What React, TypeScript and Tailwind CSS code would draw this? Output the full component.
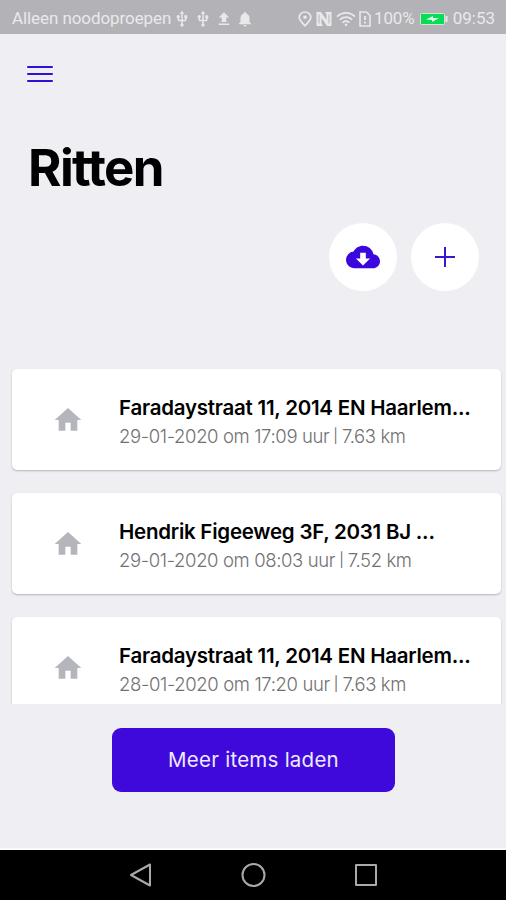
import { MdCloudDownload, MdFileUpload, MdHome, MdNotifications, MdUsb } from "react-icons/md";

type Ride = { title: string; time: string; distance: string };

const rides: Ride[] = [
  { title: "Faradaystraat 11, 2014 EN Haarlem...", time: "29-01-2020 om 17:09 uur", distance: "7.63 km" },
  { title: "Hendrik Figeeweg 3F, 2031 BJ ...", time: "29-01-2020 om 08:03 uur", distance: "7.52 km" },
  { title: "Faradaystraat 11, 2014 EN Haarlem...", time: "28-01-2020 om 17:20 uur", distance: "7.63 km" },
];

function StatusBar() {
  return (
    <header className="flex h-[34px] shrink-0 items-center bg-[#b3b2b7] pt-[3px] pr-[11px] pl-3 font-[Roboto,sans-serif] text-[17px] leading-none text-[#e9e9ec]">
      <span className="whitespace-nowrap tracking-[-0.08px]">Alleen noodoproepen</span>
      <MdUsb className="ml-[2px] size-[18px] shrink-0" />
      <MdUsb className="ml-[3px] size-[18px] shrink-0" />
      <MdFileUpload className="ml-[3px] size-[18px] shrink-0" />
      <MdNotifications className="ml-[3px] size-[18px] shrink-0" />
      <div className="ml-auto flex items-center">
        <svg viewBox="0 0 14 16" className="h-4 w-[14px]" fill="none" stroke="currentColor" strokeWidth="1.7">
          <path d="M7 14.800C4.500 12 1.200 9.300 1.200 6.300a5.800 5.300 0 0 1 11.600 0C12.800 9.300 9.500 12 7 14.800z" />
          <circle cx="7" cy="6.300" r="1.800" fill="currentColor" stroke="none" />
        </svg>
        <svg viewBox="0 0 16 16" className="ml-1 size-4" fill="currentColor">
          <path d="M.5 15V1H5l5.500 8V3.500L9 1h6.500v14H11L5.500 7v5.500L7 15z" />
          <path d="M3 3.500v9M13 3.500v9" fill="none" stroke="#b3b2b7" strokeWidth="1" />
        </svg>
        <svg viewBox="0 0 20 16" className="ml-[4px] h-4 w-5" fill="none" stroke="currentColor" strokeWidth="1.7" strokeLinecap="round">
          <path d="M1.500 5.200a12.500 12.500 0 0 1 17 0M4.300 8.300a8.500 8.500 0 0 1 11.400 0M7 11.300a4.700 4.700 0 0 1 6 0" />
          <circle cx="10" cy="13.800" r="1.300" fill="currentColor" stroke="none" />
        </svg>
        <svg viewBox="0 0 12 16" className="ml-[3px] h-4 w-3" fill="none" stroke="currentColor" strokeWidth="1.6">
          <path d="M1 1h6.500L11 4.500V15H1z" />
          <path d="M6 5v4M6 10.500v2" strokeWidth="1.8" />
        </svg>
        <span className="ml-[3px] tracking-[-0.1px]">100%</span>
        <svg viewBox="0 0 28 12" className="ml-[5px] h-3 w-7">
          <rect x=".5" y=".5" width="24" height="11" rx="1" fill="#08db56" stroke="#d5e3da" />
          <path d="M6 6.5 13 3v2h6l-7 4V7z" fill="#e4fbea" />
          <rect x="25.5" y="3" width="2" height="6" fill="#e9e9ec" />
        </svg>
        <span className="ml-[5px]">09:53</span>
      </div>
    </header>
  );
}

function RideCard({ ride }: { ride: Ride }) {
  return (
    <article className="flex h-[101px] shrink-0 items-center rounded-[5px] bg-white pl-10 shadow-[0_1px_2px_rgba(0,0,0,0.25)]">
      <MdHome className="size-8 shrink-0 text-[#b4b6bb]" />
      <div className="ml-[35px] whitespace-nowrap pt-1">
        <h2 className="text-[20.5px] leading-[28px] font-semibold tracking-[-0.24px] text-black">{ride.title}</h2>
        <p className="flex items-center text-[18.5px] leading-[28px] font-light tracking-[-0.37px] text-[#717174]">
          {ride.time}
          <span className="mx-[4px] text-[14px] font-normal tracking-normal">|</span>
          {ride.distance}
        </p>
      </div>
    </article>
  );
}

export default function App() {
  return (
    <div className="flex h-[900px] w-[506px] flex-col overflow-hidden bg-[#efeef3] font-[Inter,sans-serif]">
      <StatusBar />
      <main className="flex min-h-0 flex-1 flex-col border-b-2 border-[#fafafa]">
        <button aria-label="Menu" className="mt-8 ml-[27px] flex w-[26px] flex-col gap-[5px]">
          <span className="h-[2px] rounded-full bg-[#2c11d6]" />
          <span className="h-[2px] rounded-full bg-[#2c11d6]" />
          <span className="h-[2px] rounded-full bg-[#2c11d6]" />
        </button>
        <h1 className="mt-[56px] ml-7 h-[60px] text-[51px] leading-[60px] font-bold tracking-[-1.6px] text-black">Ritten</h1>
        <div className="mt-[25px] mr-[27px] flex justify-end gap-[14px]">
          <button aria-label="Downloaden" className="flex size-[68px] items-center justify-center rounded-full bg-white">
            <MdCloudDownload className="size-[34px] text-[#3a08dc]" />
          </button>
          <button aria-label="Toevoegen" className="flex size-[68px] items-center justify-center rounded-full bg-white">
            <svg viewBox="0 0 20 20" className="size-5" stroke="#3517d6" strokeWidth="2"><path d="M10 0v20M0 10h20" /></svg>
          </button>
        </div>
        <section className="mt-[69px] flex h-[344px] shrink-0 flex-col gap-[23px] overflow-hidden pt-[9px] pr-[5px] pl-3">
          {rides.map((ride) => <RideCard key={ride.time} ride={ride} />)}
        </section>
        <button className="mt-6 ml-[112px] h-16 w-[283px] shrink-0 rounded-[9px] bg-[#4009dc] text-[20.5px] tracking-[0.25px] text-[#eeeaff]">Meer items laden</button>
      </main>
      <nav className="flex h-[50px] shrink-0 items-center bg-black pl-[129px] text-[#aaa]">
        <svg viewBox="0 0 24 26" className="h-[26px] w-6" fill="none" stroke="currentColor" strokeWidth="2" strokeLinejoin="round"><path d="M21 2.500v21L2 13z" /></svg>
        <svg viewBox="0 0 26 26" className="ml-[87px] size-[26px]" fill="none" stroke="currentColor" strokeWidth="2"><circle cx="13.500" cy="13" r="11" /></svg>
        <svg viewBox="0 0 24 24" className="ml-[88px] size-6" fill="none" stroke="currentColor" strokeWidth="2" strokeLinejoin="round"><path d="M2 2h20v20H2z" /></svg>
      </nav>
    </div>
  );
}
